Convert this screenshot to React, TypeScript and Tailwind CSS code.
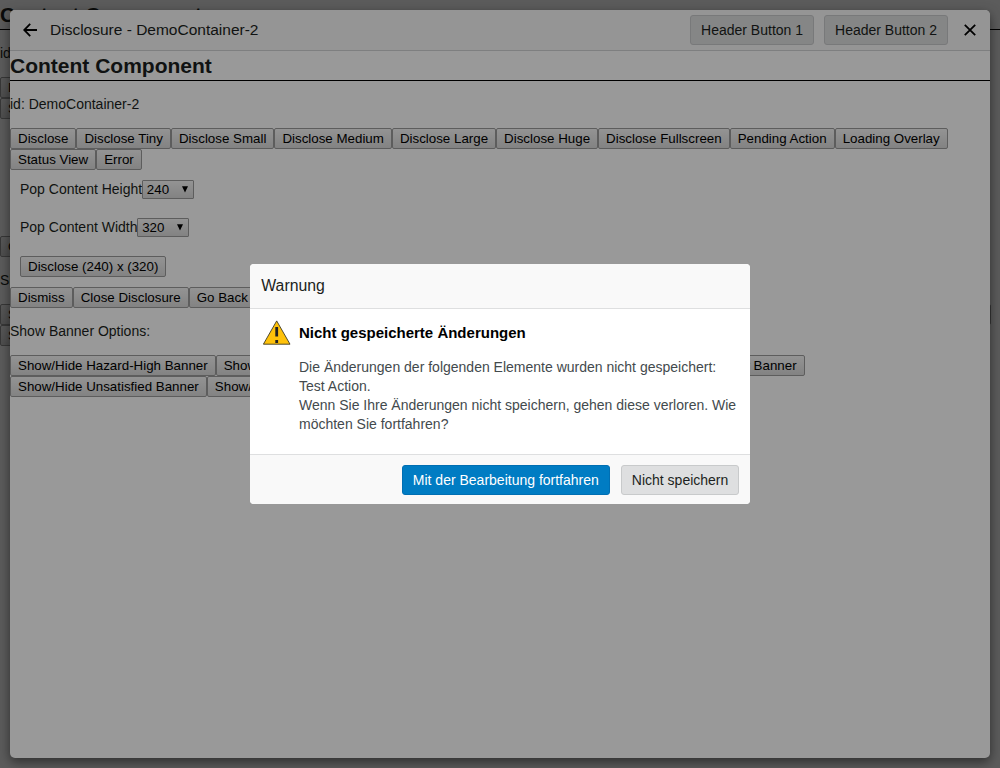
import type { ReactNode } from "react";

function NativeButton({ children }: { children: ReactNode }) {
  return (
    <button className="h-[21px] shrink-0 whitespace-nowrap rounded-[2px] border border-[#9c9c9c] bg-gradient-to-b from-[#f6f6f6] to-[#dadada] px-[7.03px] text-[13.333px] leading-[19px] text-black">
      {children}
    </button>
  );
}

function NativeSelect({ value }: { value: string }) {
  return (
    <div className="-ml-[0.4px] flex h-[19px] w-[52px] items-center justify-between rounded-[1px] border border-[#9c9c9c] bg-gradient-to-b from-[#f6f6f6] to-[#dadada] pl-1 pr-1 text-[13.333px] leading-[17px] text-black">
      <span>{value}</span>
      <svg width="8" height="7" viewBox="0 0 8 7">
        <path d="M1 0.2h6L4 6.4z" fill="#000" />
      </svg>
    </div>
  );
}

const discloseActions = [
  "Disclose",
  "Disclose Tiny",
  "Disclose Small",
  "Disclose Medium",
  "Disclose Large",
  "Disclose Huge",
  "Disclose Fullscreen",
  "Pending Action",
  "Loading Overlay",
  "Status View",
  "Error",
];

const banners = ["Hazard-High", "Hazard-Medium", "Hazard-Low", "Error", "Unsatisfied", "Unverified", "Custom"];

function DemoContent({ id, root = false }: { id: string; root?: boolean }) {
  return (
    <div className="text-[14px] leading-[19px] text-[#1c1f21]">
      <h1 className="h-[30px] border-b border-black text-[21px] font-bold leading-[30px]">Content Component</h1>
      <p className="mt-[14px]">id: {id}</p>
      <div className="mt-[14px] flex flex-wrap">
        {discloseActions.map((label) => (
          <NativeButton key={label}>{label}</NativeButton>
        ))}
      </div>
      <div className="px-[10px]">
        <div className="mt-[10px] flex h-[19px] items-center">
          Pop Content Height
          <NativeSelect value="240" />
        </div>
        <div className="mt-[19px] flex h-[19px] items-center">
          Pop Content Width
          <NativeSelect value="320" />
        </div>
        <div className="mt-[19px] flex">
          <NativeButton>Disclose (240) x (320)</NativeButton>
        </div>
      </div>
      <div className="mt-[10px] flex">
        {!root && <NativeButton>Dismiss</NativeButton>}
        <NativeButton>Close Disclosure</NativeButton>
        <NativeButton>Go Back</NativeButton>
      </div>
      <p className="mt-[14px]">Show Banner Options:</p>
      <div className="mt-[14px] flex flex-wrap">
        {banners.map((name) => (
          <NativeButton key={name}>{`Show/Hide ${name} Banner`}</NativeButton>
        ))}
      </div>
    </div>
  );
}

function HeaderButton({ children }: { children: ReactNode }) {
  return (
    <button className="h-[30px] rounded-[3px] border border-[#c8cacb] bg-[#dedfe0] px-[10px] text-[14px] leading-5 text-[#1c1f21]">
      {children}
    </button>
  );
}

function DisclosurePanel() {
  return (
    <section className="flex h-[748px] w-[980px] flex-col overflow-hidden rounded-[5px] bg-white shadow-[0_4px_12px_rgba(0,0,0,0.5)]">
      <header className="flex h-[41px] shrink-0 items-center border-b border-[#d3d4d5] bg-[#f8f8f8] pb-px pl-[13px] pr-[14px]">
        <svg width="14" height="14" viewBox="0 0 14 14" fill="none" stroke="#000" strokeWidth="1.8">
          <path d="M7.2 0.8L1.2 7l6 6.2M1.2 7H14" />
        </svg>
        <span className="ml-[13px] flex-1 text-[15.5px] text-[#1c1f21]">Disclosure - DemoContainer-2</span>
        <div className="flex gap-[10px]">
          <HeaderButton>Header Button 1</HeaderButton>
          <HeaderButton>Header Button 2</HeaderButton>
        </div>
        <svg className="ml-4" width="12" height="12" viewBox="0 0 12 12" fill="none" stroke="#000" strokeWidth="1.8">
          <path d="M0.8 0.8l10.4 10.4M11.2 0.8L0.8 11.2" />
        </svg>
      </header>
      <DemoContent id="DemoContainer-2" />
    </section>
  );
}

function WarningIcon() {
  return (
    <svg className="mt-[11px] shrink-0" width="28" height="25" viewBox="0 0 28 25">
      <path d="M13.7 0.9L27 24.2H0.4z" fill="#ffc20a" stroke="#3d3923" strokeWidth="0.9" />
      <path d="M12.3 7h2.8v9.5h-2.8zM12.3 20h2.8v3h-2.8z" fill="#222" />
    </svg>
  );
}

function WarningDialog() {
  return (
    <section role="dialog" className="flex h-[240px] w-[500px] flex-col overflow-hidden rounded-[4px] bg-white">
      <header className="h-[45px] border-b border-[#dedfe0] bg-[#f9f9f9] pl-[11.3px] text-[15.8px] leading-[43px] text-[#1c1f21]">
        Warnung
      </header>
      <div className="flex flex-1 px-[13px]">
        <WarningIcon />
        <div className="ml-2 mt-[14px] leading-[19px]">
          <h2 className="text-[15px] font-bold text-black">Nicht gespeicherte Änderungen</h2>
          <p className="mt-4 whitespace-nowrap text-[14px] text-[#434a4d]">
            Die Änderungen der folgenden Elemente wurden nicht gespeichert:
            <br />
            Test Action.
            <br />
            Wenn Sie Ihre Änderungen nicht speichern, gehen diese verloren. Wie
            <br />
            möchten Sie fortfahren?
          </p>
        </div>
      </div>
      <footer className="flex h-[50px] justify-end gap-[11px] border-t border-[#dedfe0] bg-[#f9f9f9] pl-[11px] pr-[10.7px] pt-[10px]">
        <button className="h-[30px] rounded-[3px] border border-[#006fb3] bg-[#007cc3] px-[10px] text-[14px] text-white">
          Mit der Bearbeitung fortfahren
        </button>
        <HeaderButton>Nicht speichern</HeaderButton>
      </footer>
    </section>
  );
}

export default function App() {
  return (
    <main className="relative h-[768px] w-[1000px] overflow-hidden bg-white font-['Liberation_Sans',Arial,sans-serif]">
      <DemoContent id="root" root />
      <div className="absolute inset-0 flex items-center justify-center bg-black/40">
        <DisclosurePanel />
      </div>
      <div className="absolute inset-0 flex items-center justify-center bg-black/40">
        <WarningDialog />
      </div>
    </main>
  );
}
